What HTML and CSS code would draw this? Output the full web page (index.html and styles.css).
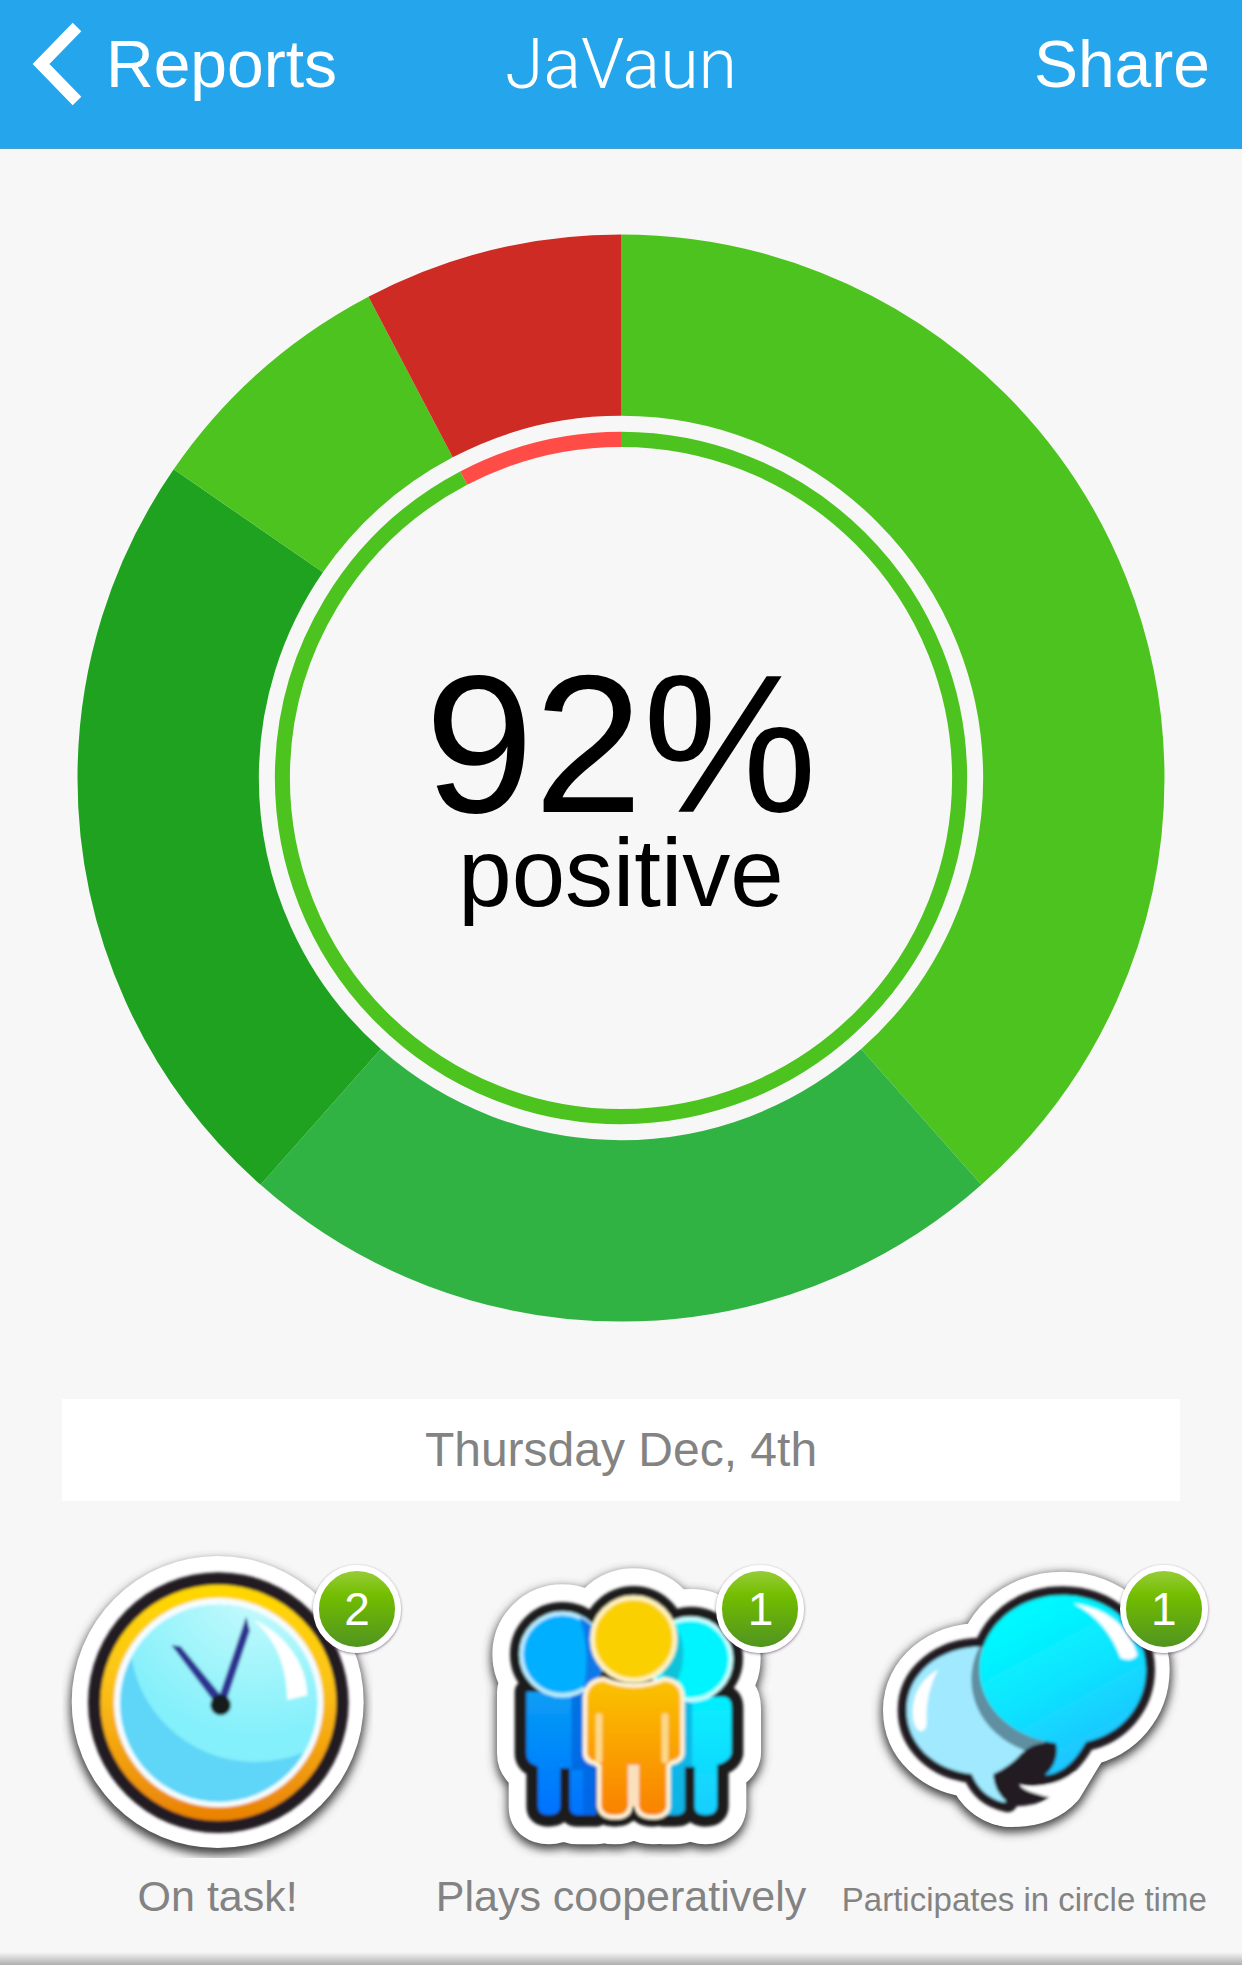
FILE: index.html
```html
<!DOCTYPE html>
<html lang="en">
<head>
    <meta charset="UTF-8">
    <meta name="viewport" content="width=device-width, initial-scale=1.0">
    <title>JaVaun - Report</title>
    <link rel="stylesheet" href="styles.css">
</head>
<body>
    <header class="navbar">
        <button class="nav-button back" type="button">
            <svg class="chevron" viewBox="0 0 50 84" aria-hidden="true">
                <path d="M45 5 L9 42 L45 79" fill="none" stroke="#fff" stroke-width="12"/>
            </svg>
            Reports
        </button>
        <h1 class="title">JaVaun</h1>
        <button class="nav-button share" type="button">Share</button>
    </header>

    <main>
        <section class="chart">
            <!-- 13 points in total, each circle is split with pathLength -->
            <svg class="donut" viewBox="0 0 1086 1086" aria-hidden="true">
                <g fill="none" stroke-width="181" transform="rotate(-90 543 543)">
                    <circle cx="543" cy="543" r="452" pathLength="13" stroke="#4dc31f" stroke-dasharray="5 8"/>
                    <circle cx="543" cy="543" r="452" pathLength="13" stroke="#31b344" stroke-dasharray="3 10" stroke-dashoffset="-5"/>
                    <circle cx="543" cy="543" r="452" pathLength="13" stroke="#1fa220" stroke-dasharray="3 10" stroke-dashoffset="-8"/>
                    <circle cx="543" cy="543" r="452" pathLength="13" stroke="#4dc31f" stroke-dasharray="1 12" stroke-dashoffset="-11"/>
                    <circle cx="543" cy="543" r="452" pathLength="13" stroke="#ce2b24" stroke-dasharray="1 12" stroke-dashoffset="-12"/>
                </g>
                <g fill="none" stroke-width="15" transform="rotate(-90 543 543)">
                    <circle cx="543" cy="543" r="338" pathLength="13" stroke="#4dc31f" stroke-dasharray="12 1"/>
                    <circle cx="543" cy="543" r="338" pathLength="13" stroke="#ff4c47" stroke-dasharray="1 12" stroke-dashoffset="-12"/>
                </g>
            </svg>
            <div class="score">
                <span class="percent">92%</span>
                <span class="caption">positive</span>
            </div>
        </section>

        <h2 class="date">Thursday Dec, 4th</h2>

        <section class="skills">
            <figure class="skill">
                <div class="icon">
                    <svg viewBox="36 21 933 933" aria-hidden="true">
                        <defs>
                            <linearGradient id="rim" x1="0" y1="0" x2="0" y2="1">
                                <stop offset="0" stop-color="#ffd800"/>
                                <stop offset="0.4" stop-color="#fcc419"/>
                                <stop offset="1" stop-color="#ea8104"/>
                            </linearGradient>
                            <radialGradient id="glass" cx="0.5" cy="0.3" r="0.6">
                                <stop offset="0" stop-color="#c8fbfc"/>
                                <stop offset="1" stop-color="#84f0fb"/>
                            </radialGradient>
                            <clipPath id="face"><circle cx="506" cy="490" r="296"/></clipPath>
                            <filter id="soft" x="-20%" y="-20%" width="140%" height="140%"><feGaussianBlur stdDeviation="14"/></filter>
                            <filter id="smooth"><feGaussianBlur stdDeviation="5"/></filter>
                        </defs>
                        <circle cx="503" cy="502" r="443" fill="#444" filter="url(#soft)"/>
                        <circle cx="503" cy="486" r="438" fill="#fff"/>
                        <g filter="url(#smooth)">
                            <circle cx="505" cy="488" r="391" fill="#231f20"/>
                            <circle cx="505" cy="488" r="354" fill="url(#rim)"/>
                            <circle cx="506" cy="488" r="314" fill="#f4fdff"/>
                            <circle cx="506" cy="490" r="296" fill="#5fd6f8"/>
                            <circle cx="615" cy="290" r="376" fill="url(#glass)" clip-path="url(#face)"/>
                            <path d="M610 240 C690 270 770 360 772 466 L712 480 C710 380 680 300 610 240 Z" fill="#fff"/>
                            <path d="M372 320 L390 322 L512 470 L494 482 Z M588 242 L596 272 L528 474 L512 466 Z" fill="#2e3192" stroke="#2e3192" stroke-width="7"/>
                            <circle cx="512" cy="495" r="31" fill="#181a1b"/>
                        </g>
                    </svg>
                    <span class="badge">2</span>
                </div>
                <figcaption class="label">On task!</figcaption>
            </figure>

            <figure class="skill">
                <div class="icon">
                    <svg viewBox="106 21 933 933" aria-hidden="true">
                        <defs>
                            <linearGradient id="blue" gradientUnits="userSpaceOnUse" x1="0" y1="440" x2="0" y2="820">
                                <stop offset="0" stop-color="#089ff5"/>
                                <stop offset="1" stop-color="#0072ff"/>
                            </linearGradient>
                            <linearGradient id="cyan" gradientUnits="userSpaceOnUse" x1="0" y1="470" x2="0" y2="820">
                                <stop offset="0" stop-color="#04efff"/>
                                <stop offset="1" stop-color="#18ceff"/>
                            </linearGradient>
                            <linearGradient id="orange" gradientUnits="userSpaceOnUse" x1="0" y1="430" x2="0" y2="820">
                                <stop offset="0" stop-color="#fac104"/>
                                <stop offset="1" stop-color="#f98200"/>
                            </linearGradient>
                            <clipPath id="leftShade"><path d="M448 215 H530 V840 H460 V690 H425 V460 Q470 340 448 215 Z"/></clipPath>
                            <clipPath id="rightShade"><path d="M700 220 H742 Q780 340 742 430 L788 480 V840 H700 Z"/></clipPath>
                            <path id="leftBody" d="M290 455 H500 V825 H445 Q420 825 420 800 V685 H392 V800 Q390 825 358 825 Q325 825 325 800 V680 Q290 670 290 640 Z"/>
                            <path id="rightBody" d="M710 470 H880 Q906 470 906 505 V640 Q900 665 862 675 V800 Q860 825 828 825 Q795 825 795 800 V680 H765 V810 Q760 825 735 825 H700 Z"/>
                            <path id="midBody" d="M520 424 Q612 462 705 424 Q752 430 752 475 V640 Q750 658 724 662 L710 675 V800 Q705 825 670 825 Q632 825 628 800 V675 H595 V800 Q592 825 555 825 Q520 825 515 800 V675 L495 662 Q472 658 472 635 V475 Q475 430 520 424 Z"/>
                            <g id="crowd">
                                <circle cx="398" cy="343" r="122"/>
                                <circle cx="785" cy="355" r="120"/>
                                <circle cx="612" cy="297" r="124"/>
                                <use href="#leftBody"/>
                                <use href="#rightBody"/>
                                <use href="#midBody"/>
                            </g>
                        </defs>
                        <g filter="url(#soft)">
                            <use href="#crowd" y="12" fill="#444" stroke="#444" stroke-width="184" stroke-linejoin="round"/>
                        </g>
                        <use href="#crowd" fill="#fff" stroke="#fff" stroke-width="176" stroke-linejoin="round"/>
                        <g filter="url(#smooth)">
                            <use href="#crowd" fill="#1e1b1c" stroke="#1e1b1c" stroke-width="70" stroke-linejoin="round"/>
                            <use href="#leftBody" fill="url(#blue)"/>
                            <use href="#leftBody" fill="#0061dc" opacity="0.7" clip-path="url(#leftShade)"/>
                            <circle cx="398" cy="343" r="123" fill="#06afff" stroke="#b8edff" stroke-width="13"/>
                            <path d="M450 232 Q498 254 516 300 V395 Q502 430 462 446 Q484 340 450 232 Z" fill="#0779e8"/>
                            <use href="#rightBody" fill="url(#cyan)"/>
                            <use href="#rightBody" fill="#08a9dd" opacity="0.75" clip-path="url(#rightShade)"/>
                            <circle cx="782" cy="358" r="122" fill="#02f4ff" stroke="#c9ffff" stroke-width="13"/>
                            <path d="M734 250 Q786 330 738 436 L700 420 V265 Z" fill="#0ac3d9"/>
                            <use href="#midBody" fill="#fff3d6" stroke="#fff3d6" stroke-width="26"/>
                            <rect x="593" y="670" width="37" height="130" fill="#fae0bd"/>
                            <use href="#midBody" fill="url(#orange)"/>
                            <path d="M508 530 V660 M706 530 V660" stroke="#fbd987" stroke-width="20" stroke-linecap="round"/>
                            <circle cx="612" cy="297" r="124" fill="#fbd004" stroke="#fff3bd" stroke-width="14"/>
                        </g>
                    </svg>
                    <span class="badge">1</span>
                </div>
                <figcaption class="label">Plays cooperatively</figcaption>
            </figure>

            <figure class="skill">
                <div class="icon">
                    <svg viewBox="117 21 933 933" aria-hidden="true">
                        <defs>
                            <linearGradient id="bubble" x1="0.3" y1="0.1" x2="0.7" y2="0.9">
                                <stop offset="0" stop-color="#00f8ff"/>
                                <stop offset="0.5" stop-color="#0de2ff"/>
                                <stop offset="1" stop-color="#1fc2ff"/>
                            </linearGradient>
                            <path id="back" d="M460 320 C330 318 230 400 230 510 C230 615 315 690 425 702 C445 748 475 778 534 790 Q490 750 490 705 C600 680 670 610 670 510 C670 400 580 320 460 320 Z"/>
                            <path id="front" d="M698 166 C555 166 448 268 448 388 C448 500 545 594 678 610 Q690 665 645 706 C705 700 740 655 768 606 C870 585 948 500 948 388 C948 268 840 166 698 166 Z"/>
                            <path id="tails" d="M490 702 Q540 680 575 640 Q620 600 672 612 Q680 660 635 700 Q680 728 735 690 Q650 755 566 732 Q580 755 660 772 Q600 812 490 794 Q525 790 530 782 Z"/>
                            <path id="base" d="M425 702 Q470 790 545 790 Q640 790 690 735 L768 606 Z"/>
                            <clipPath id="backClip"><use href="#back"/></clipPath>
                            <g id="talk"><use href="#back"/><use href="#front"/><use href="#base"/></g>
                        </defs>
                        <g filter="url(#soft)">
                            <use href="#talk" y="10" fill="#444" stroke="#444" stroke-width="154" stroke-linejoin="round"/>
                        </g>
                        <use href="#talk" fill="#fff" stroke="#fff" stroke-width="142" stroke-linejoin="round"/>
                        <g filter="url(#smooth)">
                            <use href="#back" fill="#231f20" stroke="#231f20" stroke-width="54" stroke-linejoin="round"/>
                            <use href="#front" fill="#231f20" stroke="#231f20" stroke-width="54" stroke-linejoin="round"/>
                            <path d="M566 738 Q650 755 735 700 L760 735 L700 800 L630 800 L664 772 Q600 764 566 738 Z" fill="#fff"/>
                            <use href="#back" fill="#a0e9ff"/>
                            <ellipse cx="680" cy="418" rx="256" ry="230" fill="#5f8fa0" clip-path="url(#backClip)"/>
                            <use href="#tails" fill="#231f20"/>
                            <use href="#front" fill="url(#bubble)"/>
                            <path d="M325 388 Q252 430 248 510 Q248 562 270 574 Q288 575 290 550 Q285 460 325 388 Z" fill="#fff"/>
                            <path d="M730 190 Q885 215 922 345 Q905 368 872 354 Q830 240 730 190 Z" fill="#fff"/>
                        </g>
                    </svg>
                    <span class="badge">1</span>
                </div>
                <figcaption class="label"><span class="label-small">Participates in circle time</span></figcaption>
            </figure>
        </section>
    </main>
    <div class="bottom-shade"></div>
</body>
</html>
```

FILE: styles.css
```css
* { box-sizing: border-box; }
body { margin: 0; min-height: 100vh; display: flex; flex-direction: column; background-color: #f7f7f7; font-family: "Liberation Sans", Arial, sans-serif; }
main { flex: 1; }

.navbar { display: grid; grid-template-columns: 1fr auto 1fr; align-items: center; padding: 22px 32px 41px; background-color: #25a6ec; border-bottom: 2px solid #4b9dc9; }
.nav-button { display: flex; align-items: center; gap: 24px; padding: 0; border: none; background: none; color: #fff; font-family: inherit; font-size: 66px; line-height: 84px; cursor: pointer; }
.back { justify-self: start; }
.share { justify-self: end; }
.chevron { width: 50px; height: 84px; }
.title { margin: 0; color: #fff; font-family: Roboto, sans-serif; font-size: 70px; font-weight: 300; line-height: 84px; }

.chart { display: grid; padding: 85px 77px 77px; }
.donut { grid-area: 1 / 1; display: block; width: 100%; }
.score { grid-area: 1 / 1; place-self: center; display: flex; flex-direction: column; align-items: center; padding-top: 30px; color: #000; }
.percent { font-size: 196px; line-height: 160px; }
.caption { font-size: 96px; line-height: 96px; }

.date { margin: 0 62px; background-color: #fff; color: #838383; font-size: 48px; font-weight: normal; line-height: 102px; text-align: center; }

.skills { display: grid; grid-template-columns: repeat(3, 1fr); padding: 46px 16px 22px; }
.skill { display: flex; flex-direction: column; align-items: center; gap: 8px; margin: 0; }
.icon { position: relative; width: 311px; height: 311px; }
.icon svg { display: block; width: 100%; height: 100%; }
.badge { position: absolute; top: 18px; right: -28px; width: 88px; height: 88px; border: 6px solid #fff; border-radius: 50%; background: linear-gradient(#a0d043, #72bd00 35%, #4c8f24); background-origin: border-box; box-shadow: 0 1px 3px rgba(60, 30, 70, 0.6); color: #fff; font-size: 46px; line-height: 76px; text-align: center; }
.label { color: #838383; font-size: 43px; line-height: 60px; white-space: nowrap; }
.label-small { font-size: 33px; }

.bottom-shade { height: 16px; background: linear-gradient(#f7f7f7, #b0b0b0 80%); }
```
